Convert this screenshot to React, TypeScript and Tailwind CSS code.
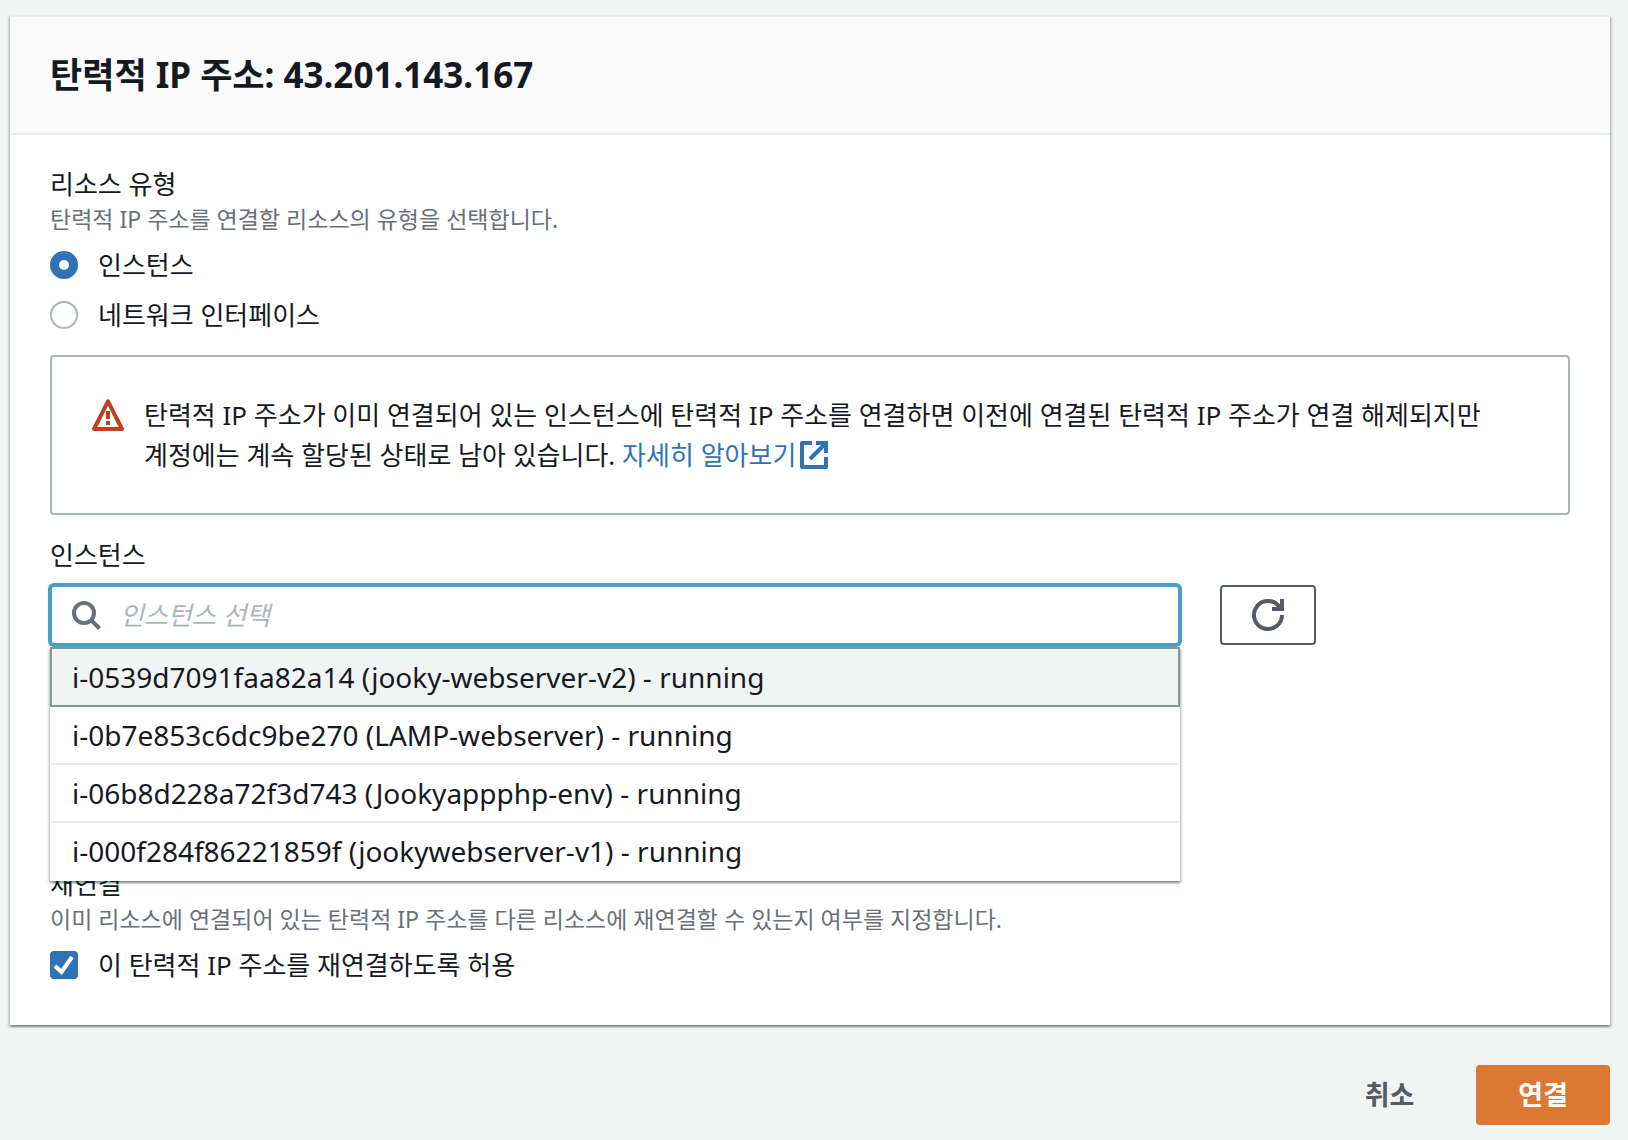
import { useState } from "react";

const instances = [
  "i-0539d7091faa82a14 (jooky-webserver-v2) - running",
  "i-0b7e853c6dc9be270 (LAMP-webserver) - running",
  "i-06b8d228a72f3d743 (Jookyappphp-env) - running",
  "i-000f284f86221859f (jookywebserver-v1) - running",
];

const resourceTypes = ["인스턴스", "네트워크 인터페이스"];

function WarningIcon() {
  return (
    <svg className="size-8 shrink-0" viewBox="0 0 16 16" fill="none" stroke="#c03f23" aria-hidden="true">
      <path d="M8 1.2 15 15H1L8 1.2Z" strokeWidth="2" strokeLinejoin="round" />
      <path d="M8 6v4M8 11v2" strokeWidth="2" />
    </svg>
  );
}

function ExternalIcon() {
  return (
    <svg className="ml-1 inline-block size-7 align-[-4px]" viewBox="0 0 14 14" fill="none" stroke="#3072b8" strokeWidth="2" aria-hidden="true">
      <path d="M6 1H1v12h12V8" strokeLinejoin="round" />
      <path d="M8 1h5v5M13 1 5 9" />
    </svg>
  );
}

function SearchIcon() {
  return (
    <svg className="pointer-events-none absolute top-3.5 left-5 size-8" viewBox="0 0 32 32" fill="none" stroke="#687078" strokeWidth="4" aria-hidden="true">
      <circle cx="14" cy="14" r="10" />
      <path d="m21 21 8.5 8.5" />
    </svg>
  );
}

function RefreshIcon() {
  return (
    <svg className="size-8" viewBox="0 0 16 16" fill="none" stroke="#545b64" strokeWidth="2" aria-hidden="true">
      <path d="M15 8a7 7 0 1 1-1.9-4.8L14.6 5" />
      <path d="M15 0v5h-5" />
    </svg>
  );
}

export default function App() {
  const [type, setType] = useState(0);
  const [allow, setAllow] = useState(true);

  return (
    <main className="min-h-screen bg-[#f2f4f3] pt-[15px] pr-[18px] pb-4 pl-2.5 font-['Noto_Sans','Noto_Sans_CJK_KR',sans-serif] text-[26px] leading-10 break-keep text-[#16191f]">
      <section className="border-t-2 border-[#eaeded] bg-white shadow-[0_2px_2px_0_rgba(0,28,36,0.3),2px_2px_2px_0_rgba(0,28,36,0.15),-2px_2px_2px_0_rgba(0,28,36,0.15)]">
        <header className="border-b-2 border-[#eaeded] bg-[#fafafa] px-10 py-[34px]">
          <h1 className="text-[35px] leading-[48px] font-bold">탄력적 IP 주소: 43.201.143.167</h1>
        </header>

        <div className="px-10 pt-7 pb-10">
          <fieldset>
            <legend className="leading-[42px]">리소스 유형</legend>
            <p className="text-[23px] leading-7 text-[#687078]">탄력적 IP 주소를 연결할 리소스의 유형을 선택합니다.</p>
            <div className="mt-3 flex flex-col items-start gap-2.5">
              {resourceTypes.map((name, i) => (
                <label key={name} className="flex items-center gap-5">
                  <input
                    type="radio"
                    name="resource-type"
                    checked={type === i}
                    onChange={() => setType(i)}
                    className="size-7 appearance-none rounded-full border-2 border-[#aab7b8] bg-white checked:border-[9px] checked:border-[#3072b8]"
                  />
                  {name}
                </label>
              ))}
            </div>
          </fieldset>

          <div className="mt-5 flex gap-5 rounded border-2 border-[#aab7b8] px-10 py-[38px]">
            <span className="flex h-10 items-center">
              <WarningIcon />
            </span>
            <p>
              탄력적 IP 주소가 이미 연결되어 있는 인스턴스에 탄력적 IP 주소를 연결하면 이전에 연결된 탄력적 IP 주소가 연결 해제되지만 계정에는 계속 할당된 상태로 남아 있습니다.{" "}
              <a href="#learn-more" className="text-[#3072b8]">
                자세히 알아보기
                <ExternalIcon />
              </a>
            </p>
          </div>

          <label htmlFor="instance" className="mt-5 mb-2.5 block">
            인스턴스
          </label>
          <div className="grid grid-cols-4 gap-10">
            <div className="relative col-span-3">
              <input
                id="instance"
                type="text"
                role="combobox"
                aria-expanded="true"
                aria-controls="instance-options"
                placeholder="인스턴스 선택"
                className="block h-[60px] w-full rounded-sm border-2 border-[#489fc8] bg-white pr-5 pl-[68px] ring-2 ring-[#489fc8] outline-none placeholder:text-[#aab7b8] placeholder:italic"
              />
              <SearchIcon />
              <ul
                id="instance-options"
                role="listbox"
                aria-label="인스턴스"
                className="absolute top-full right-0 left-0 z-10 mt-0.5 bg-white text-[28px] shadow-[0_2px_2px_0_rgba(0,28,36,0.3),2px_2px_2px_0_rgba(0,28,36,0.15),-2px_2px_2px_0_rgba(0,28,36,0.15)]"
              >
                {instances.map((name, i) => (
                  <li
                    key={name}
                    role="option"
                    aria-selected={i === 0}
                    className="relative -mt-0.5 border-2 border-transparent border-t-[#eaeded] px-5 py-2 first:z-10 first:mt-0 first:border-[#879596] first:bg-[#f2f4f3]"
                  >
                    {name}
                  </li>
                ))}
              </ul>
            </div>
            <button type="button" aria-label="새로 고침" className="flex h-[60px] w-24 items-center justify-center rounded-sm border-2 border-[#545b64] bg-white">
              <RefreshIcon />
            </button>
          </div>

          <fieldset className="mt-[218px]">
            <legend className="leading-[42px]">재연결</legend>
            <p className="text-[23px] leading-7 text-[#687078]">
              이미 리소스에 연결되어 있는 탄력적 IP 주소를 다른 리소스에 재연결할 수 있는지 여부를 지정합니다.
            </p>
            <label className="mt-3 flex items-center gap-5">
              <span className="grid size-7">
                <input
                  type="checkbox"
                  checked={allow}
                  onChange={(e) => setAllow(e.target.checked)}
                  className="peer col-start-1 row-start-1 size-7 appearance-none rounded-sm border-2 border-[#aab7b8] bg-white checked:border-[#3072b8] checked:bg-[#3072b8]"
                />
                <svg className="pointer-events-none invisible col-start-1 row-start-1 size-7 peer-checked:visible" viewBox="0 0 28 28" fill="none" stroke="#fff" strokeWidth="4" aria-hidden="true">
                  <path d="m5 15 6.5 6L22 6" />
                </svg>
              </span>
              이 탄력적 IP 주소를 재연결하도록 허용
            </label>
          </fieldset>
        </div>
      </section>

      <div className="mt-10 flex justify-end gap-5 text-[27px] font-bold">
        <button type="button" className="h-[60px] px-[42px] text-[#545b64]">
          취소
        </button>
        <button type="button" className="h-[60px] rounded-sm bg-[#dd7832] px-[42px] text-white">
          연결
        </button>
      </div>
    </main>
  );
}
